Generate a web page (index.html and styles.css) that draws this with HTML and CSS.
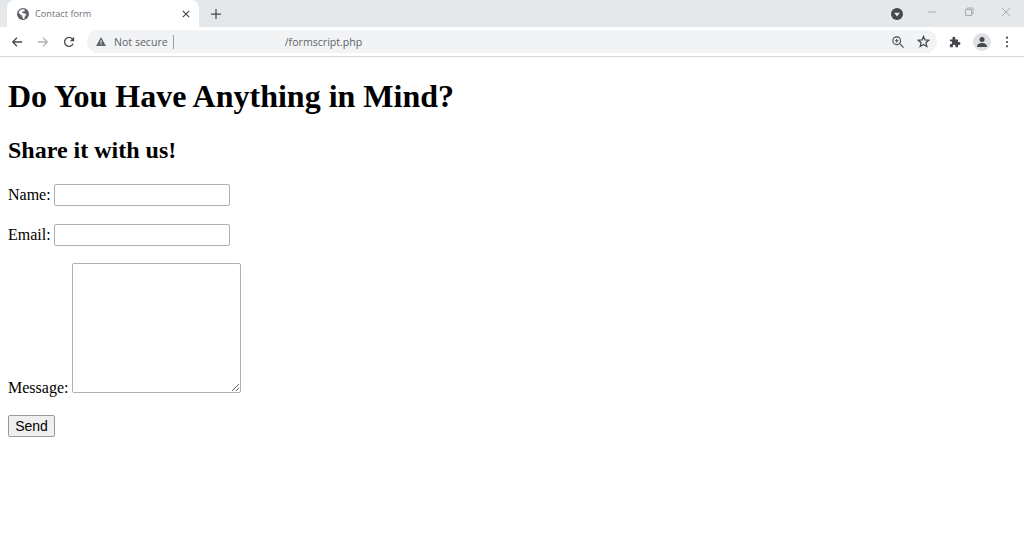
FILE: index.html
```html
<!DOCTYPE html>
<html lang="en">
<head>
<meta charset="utf-8">
<title>Contact form</title>
<link rel="stylesheet" href="styles.css">
</head>
<body>
<header class="chrome">
  <div class="tabstrip">
    <div class="tab">
      <svg class="favicon" viewBox="0 0 16 16" width="12" height="12"><circle cx="8" cy="8" r="8" fill="#5f6368"/><path d="M7 1.500 4 3 2 6l3.500 3.500L7 10v2l1.500 2.500L10 14l.5-3 2-2-2-2H8L6.500 5.500 8 4.500h1.500L10.500 2.500 9 1.500z" fill="#fff"/></svg>
      <span class="tab-title">Contact form</span>
      <svg class="tab-close" viewBox="0 0 10 10" width="8" height="8"><path d="M1 1l8 8M9 1l-8 8" stroke="#45484c" stroke-width="1.500" fill="none"/></svg>
    </div>
    <svg class="new-tab" viewBox="0 0 12 12" width="10" height="10"><path d="M6 0v12M0 6h12" stroke="#45484c" stroke-width="1.500" fill="none"/></svg>
    <div class="strip-space"></div>
    <svg class="profile-menu" viewBox="0 0 12 12" width="12" height="12"><circle cx="6" cy="6" r="6" fill="#45484c"/><path d="M3 4.800h6L6 8.500z" fill="#e5e8eb"/></svg>
    <div class="win-controls">
      <svg viewBox="0 0 10 10" width="10" height="10"><path d="M1 5h8" stroke="#a9acb0" fill="none"/></svg>
      <svg viewBox="0 0 10 10" width="10" height="10"><path d="M1.500 2.500h6v6h-6zM3 2.500V1h6v6H7.500" stroke="#a9acb0" fill="none"/></svg>
      <svg viewBox="0 0 10 10" width="10" height="10"><path d="M1 1l8 8M9 1l-8 8" stroke="#a9acb0" fill="none"/></svg>
    </div>
  </div>
  <div class="toolbar">
    <div class="nav">
      <svg viewBox="0 0 14 14" width="12" height="12"><path d="M13 7H2M7 2 2 7l5 5" stroke="#45484c" stroke-width="1.500" fill="none"/></svg>
      <svg viewBox="0 0 14 14" width="12" height="12"><path d="M1 7h11M7 2l5 5-5 5" stroke="#aeb1b5" stroke-width="1.500" fill="none"/></svg>
      <svg viewBox="0 0 14 14" width="12" height="12"><path d="M11.800 9A5.200 5.200 0 1 1 11 3.500" stroke="#45484c" stroke-width="1.500" fill="none"/><path d="M13 1v5H8z" fill="#45484c"/></svg>
    </div>
    <div class="omnibox">
      <svg class="warn" viewBox="0 0 12 11" width="10" height="9"><path d="M6 0l6 11H0z" fill="#5f6368"/><path d="M5.400 4h1.200v3.500H5.400zM5.400 8.200h1.200v1.200H5.400z" fill="#f1f3f4"/></svg>
      <span class="secure">Not secure</span>
      <span class="divider"></span>
      <span class="url">/formscript.php</span>
      <svg class="zoom-icon" viewBox="0 0 14 14" width="12" height="12"><circle cx="5.500" cy="5.500" r="4.500" stroke="#45484c" stroke-width="1.300" fill="none"/><path d="M9 9l4.500 4.500M3.500 5.500h4M5.500 3.500v4" stroke="#45484c" stroke-width="1.300" fill="none"/></svg>
      <svg class="star" viewBox="0 0 14 14" width="13" height="13"><path d="M7 1.500 8.600 5.300l4.100.3-3.100 2.700 1 4L7 10.100l-3.600 2.200 1-4-3.100-2.700 4.100-.3z" stroke="#45484c" stroke-width="1.300" fill="none"/></svg>
    </div>
    <svg class="puzzle" viewBox="0 0 14 14" width="12" height="12"><path d="M1 4h3V2.700a1.700 1.700 0 0 1 3.400 0V4h3.100v3h1.200a1.700 1.700 0 0 1 0 3.400h-1.200V13H7.500v-1.200a1.500 1.500 0 0 0-3 0V13H1V9.500h1a1.700 1.700 0 0 0 0-3.400H1z" fill="#45484c"/></svg>
    <div class="avatar"><svg viewBox="0 0 12 12" width="12" height="12"><circle cx="6" cy="3.500" r="2.500" fill="#45484c"/><path d="M1 11c0-3 2.500-4 5-4s5 1 5 4z" fill="#45484c"/></svg></div>
    <svg class="dots" viewBox="0 0 4 14" width="4" height="12"><circle cx="2" cy="2" r="1.300" fill="#45484c"/><circle cx="2" cy="7" r="1.300" fill="#45484c"/><circle cx="2" cy="12" r="1.300" fill="#45484c"/></svg>
  </div>
</header>
<main class="page">
  <h1 class="title">Do You Have Anything in Mind?</h1>
  <h2 class="subtitle">Share it with us!</h2>
  <form class="form">
    <p class="row"><label>Name: <input class="field" type="text"></label></p>
    <p class="row row-tight"><label>Email: <input class="field" type="text"></label></p>
    <p class="row"><label>Message: <textarea class="area"></textarea></label></p>
    <p class="row"><button class="send" type="button">Send</button></p>
  </form>
</main>
</body>
</html>
```
FILE: styles.css
```css
* { box-sizing: border-box; }
html, body { margin: 0; padding: 0; background: #fff; }
body { font-family: "Liberation Serif", serif; color: #000; overflow: hidden; height: 538px; }

.chrome { font-family: "Open Sans", "Noto Sans", sans-serif; height: 57px; border-bottom: 1px solid #d4d6d9; }
.tabstrip { height: 27px; background: #e5e8eb; display: flex; align-items: center; padding-left: 7px; }
.tab { width: 192px; height: 27px; background: #fff; border-radius: 8px 8px 0 0; display: flex; align-items: center; padding: 0 10px; }
.favicon { flex: none; margin-right: 6px; }
.tab-title { font-size: 9.200px; color: #6f7276; flex: 1; }
.tab-close { flex: none; margin-right: -1px; }
.new-tab { margin-left: 12px; }
.strip-space { flex: 1; }
.profile-menu { margin-right: 24px; }
.win-controls { display: flex; gap: 27px; margin-right: 13px; margin-top: -4px; }

.toolbar { height: 29px; background: #fff; display: flex; align-items: center; padding-left: 11px; }
.nav { display: flex; gap: 14px; width: 76px; }
.omnibox { width: 850px; height: 23px; background: #f1f3f4; border-radius: 12px; display: flex; align-items: center; padding-left: 9px; }
.warn { flex: none; }
.secure { font-size: 10.600px; color: #5f6368; margin-left: 8px; }
.divider { width: 1px; height: 14px; background: #9a9da1; margin-left: 5px; }
.url { font-size: 10.600px; color: #5f6368; margin-left: 111px; flex: 1; }
.zoom-icon { flex: none; margin-right: 13px; }
.star { flex: none; margin-right: 7px; }
.puzzle { margin-left: 12px; flex: none; }
.avatar { width: 18px; height: 18px; border-radius: 50%; background: #dfe1e5; display: flex; align-items: center; justify-content: center; margin-left: 12px; flex: none; }
.dots { margin-left: 14px; flex: none; }

.page { padding: 0 8px; }
.title { font-size: 32px; line-height: 37px; margin: 21px 0 0; font-weight: bold; }
.subtitle { font-size: 24px; line-height: 28px; margin: 21px 0 0; font-weight: bold; }
.form { margin-top: 20px; }
.row { font-size: 16px; margin: 0 0 18px; line-height: 18px; }
.row-tight { margin-bottom: 17px; }
.field { width: 176px; height: 22px; border: 1px solid #b0b0b0; border-radius: 2px; padding: 1px 2px; margin: 0 0 0 -1px; background: #fff; }
.area { width: 169px; height: 130px; border: 1px solid #b0b0b0; border-radius: 2px; margin: 0; padding: 2px; }
.send { width: 47px; height: 22px; font-family: "Liberation Sans", sans-serif; font-size: 14px; border: 1px solid #999; border-radius: 2px; background: #efefef; padding: 0; color: #000; }
```
